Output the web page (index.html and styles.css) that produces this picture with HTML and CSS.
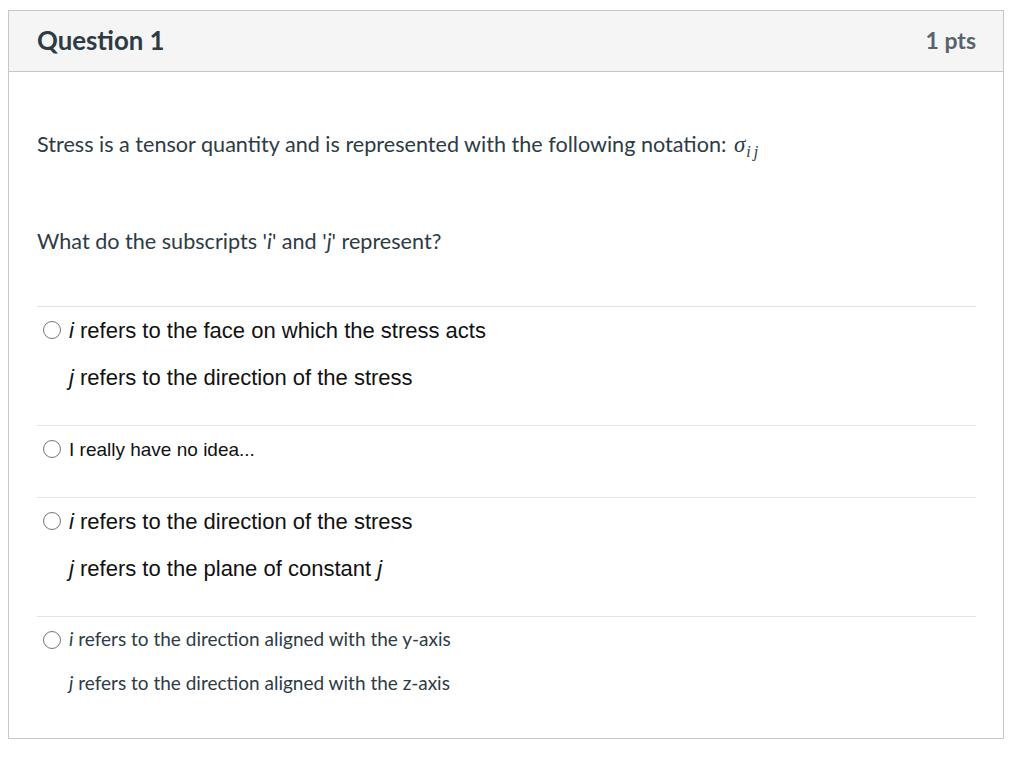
FILE: index.html
```html
<!DOCTYPE html>
<html>
<head>
<meta charset="utf-8">
<link rel="stylesheet" href="styles.css">
</head>
<body>
<div class="question">
  <div class="header">
    <div class="title">Question 1</div>
    <div class="points">1 pts</div>
  </div>
  <div class="content">
    <p class="text first">Stress is a tensor quantity and is represented with the following notation: <span class="math">σ<sub>ij</sub></span></p>
    <p class="text second">What do the subscripts '<i>i</i>' and '<i>j</i>' represent?</p>
    <div class="answers">
      <div class="answer helv">
        <span class="radio"></span>
        <div class="label">
          <p><i>i</i> refers to the face on which the stress acts</p>
          <p><i>j</i> refers to the direction of the stress</p>
        </div>
      </div>
      <div class="answer helv small">
        <span class="radio"></span>
        <div class="label">
          <p>I really have no idea...</p>
        </div>
      </div>
      <div class="answer helv">
        <span class="radio"></span>
        <div class="label">
          <p><i>i</i> refers to the direction of the stress</p>
          <p><i>j</i> refers to the plane of constant <i>j</i></p>
        </div>
      </div>
      <div class="answer lato last">
        <span class="radio"></span>
        <div class="label">
          <p><i>i</i> refers to the direction aligned with the y-axis</p>
          <p><i>j</i> refers to the direction aligned with the z-axis</p>
        </div>
      </div>
    </div>
  </div>
</div>
</body>
</html>
```
FILE: styles.css
```css
html, body {
  margin: 0;
  padding: 0;
  background: #ffffff;
}
body {
  padding: 10px 20px 0 8px;
  font-family: Lato, "Liberation Sans", sans-serif;
  color: #2d3b45;
}
.question {
  width: 994px;
  border: 1px solid #c4c8cb;
  box-sizing: content-box;
}
.header {
  height: 60px;
  background: #f5f5f5;
  border-bottom: 1px solid #c4c8cb;
  display: flex;
  align-items: center;
  justify-content: space-between;
  padding: 0 27px 0 28px;
}
.title {
  font-weight: 700;
  font-size: 25.8px;
  color: #2d3b45;
  margin-top: -2px;
}
.points {
  font-weight: 700;
  font-size: 23px;
  color: #58636b;
  margin-top: -2px;
}
.content {
  padding: 57px 27px 0 28px;
}
.text {
  margin: 0;
  font-size: 21.6px;
  line-height: 30px;
}
.second {
  margin-top: 67px;
}
.math {
  font-family: "Liberation Serif", serif;
  font-style: italic;
  font-size: 23px;
  line-height: 0;
  margin-left: 2px;
}
.math sub {
  font-size: 16px;
  line-height: 0;
  vertical-align: -5px;
  letter-spacing: 3px;
  margin-left: 1px;
}
.answers {
  margin-top: 50px;
}
.answer {
  border-top: 1px solid #e3e3e3;
  display: flex;
  align-items: flex-start;
  padding: 0 0 24px 6px;
}
.answer.last {
  padding-bottom: 33px;
}
.radio {
  width: 16px;
  height: 16px;
  border: 1px solid #777;
  border-radius: 50%;
  flex: none;
  margin: 14px 8px 0 0;
  background: #fff;
}
.label p {
  margin: 0;
  line-height: 47px;
}
.helv .label {
  font-family: "Liberation Sans", Arial, sans-serif;
  font-size: 22px;
  color: #111;
}
.helv.small .label {
  font-size: 19px;
}
.lato .label {
  font-family: Lato, sans-serif;
  font-size: 19px;
  color: #2d3b45;
}
.lato .label p {
  line-height: 44px;
}
```
